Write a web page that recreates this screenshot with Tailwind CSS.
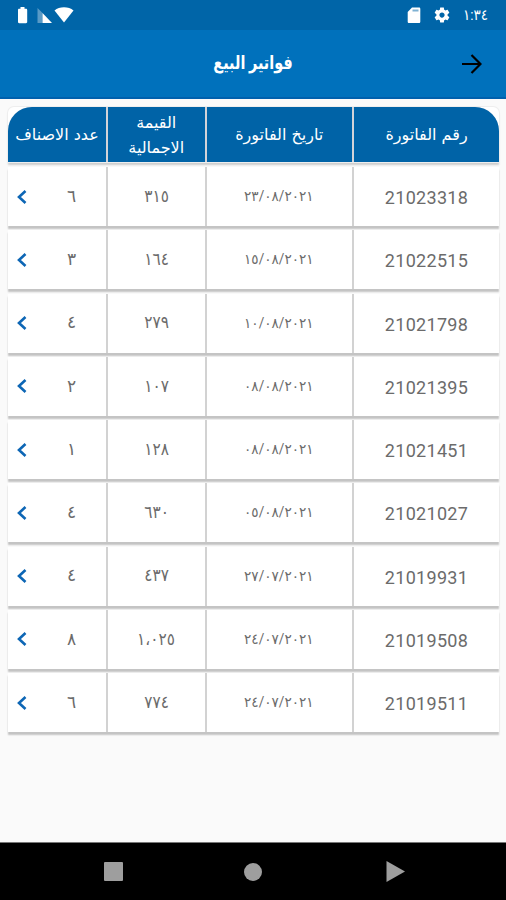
<!DOCTYPE html>
<html lang="ar">
<head>
	<meta charset="UTF-8">
	<meta name="viewport" content="width=device-width, initial-scale=1.0">
	<title>فواتير البيع</title>
	<script src="https://cdn.jsdelivr.net/npm/@tailwindcss/browser@4"></script>
</head>
<body class="bg-[#fafafa]">
	<div class="w-[506px] h-[900px] flex flex-col overflow-hidden font-['Roboto','DejaVu_Sans',sans-serif]">

		<!-- Status bar -->
		<div class="h-[30px] shrink-0 bg-[#0065a8] flex items-center justify-between pl-[17px] pr-4 text-white">
			<div class="flex items-center">
				<svg class="w-3 h-[18px]" viewBox="0 0 12 18" fill="currentColor"><path d="M3.500 1h4v1.800H9c.7 0 1.200.5 1.200 1.200v12c0 .7-.5 1.200-1.200 1.200H2.200C1.500 17.200 1 16.700 1 16V4c0-.7.5-1.200 1.200-1.200h1.300z"/></svg>
				<svg class="w-4 h-[18px] ml-2" viewBox="0 0 16 18" fill="currentColor"><path opacity=".35" d="M.5 2l5 5v10h-5z"/><path d="M5.500 7L15 17H5.500z"/></svg>
				<svg class="w-5 h-[18px] ml-px" viewBox="0 0 20 18" fill="currentColor"><path d="M10 16.500L.5 4.500C3 2.500 6.300 1.300 10 1.300s7 1.200 9.500 3.200z"/></svg>
			</div>
			<div class="flex items-center">
				<svg class="w-[14px] h-[18px]" viewBox="0 0 14 18" fill="currentColor"><path d="M5 1.500h7c.8 0 1.300.5 1.300 1.300v12.900c0 .8-.5 1.300-1.300 1.300H2c-.8 0-1.300-.5-1.300-1.300V6z"/><path d="M5.500 4.500h6" stroke="#0065a8" stroke-opacity=".5" stroke-width="2"/></svg>
				<svg class="w-[18px] h-[18px] ml-3" viewBox="0 0 24 24" fill="currentColor"><path d="M19.430 12.980c.04-.32.07-.64.07-.98s-.03-.66-.07-.98l2.110-1.650c.19-.15.24-.42.12-.64l-2-3.460c-.12-.22-.39-.3-.61-.22l-2.490 1c-.52-.4-1.080-.73-1.690-.98l-.38-2.650C14.460 2.180 14.250 2 14 2h-4c-.25 0-.46.18-.49.42l-.38 2.650c-.61.25-1.170.59-1.690.98l-2.490-1c-.23-.09-.49 0-.61.22l-2 3.460c-.13.22-.07.49.12.64l2.110 1.650c-.04.32-.07.65-.07.98s.03.66.07.98l-2.110 1.650c-.19.15-.24.42-.12.64l2 3.460c.12.22.39.3.61.22l2.490-1c.52.4 1.080.73 1.690.98l.38 2.650c.03.24.24.42.49.42h4c.25 0 .46-.18.49-.42l.38-2.650c.61-.25 1.170-.59 1.690-.98l2.490 1c.23.09.49 0 .61-.22l2-3.460c.12-.22.07-.49-.12-.64zM12 15.500c-1.930 0-3.500-1.570-3.500-3.500s1.570-3.500 3.500-3.500 3.500 1.570 3.500 3.500-1.570 3.500-3.500 3.500z"/></svg>
				<span class="ml-3 w-[27px] text-[15px] leading-none whitespace-nowrap scale-x-90 origin-left">١:٣٤</span>
			</div>
		</div>

		<!-- App bar -->
		<header class="h-[69px] shrink-0 bg-[#0071bc] border-b-2 border-[#0060ad] grid grid-cols-[68px_1fr_68px] items-center">
			<h1 class="col-start-2 text-center text-white text-[19px] font-bold scale-x-[.76]" dir="rtl">فواتير البيع</h1>
			<svg class="w-5 h-5 ml-6 mt-px" viewBox="0 0 20 20" fill="none" stroke="#000" stroke-width="2.200"><path d="M0 10h18M9.500 1l9 9-9 9"/></svg>
		</header>

		<!-- Invoices -->
		<main class="grow pl-2 pr-[7px] pt-2">
			<div class="h-[55px] mb-[5px] bg-white rounded-t-md shadow-[0_0_0_1px_#eeeeee,0_3px_2px_#cdcdcd]">
				<div class="h-full grid grid-cols-[98px_96.500px_145.500px_145px] gap-x-[2px] bg-[#d3d3d8] rounded-t-[24px] overflow-hidden text-white text-center text-[16px] leading-[25px] font-['DejaVu_Sans',sans-serif]">
					<div class="bg-[#0063a7] grid place-items-center"><span dir="rtl" class="whitespace-nowrap">عدد الاصناف</span></div>
					<div class="bg-[#0063a7] grid place-items-center"><span dir="rtl">القيمة<br>الاجمالية</span></div>
					<div class="bg-[#0063a7] grid place-items-center"><span dir="rtl">تاريخ الفاتورة</span></div>
					<div class="bg-[#0063a7] grid place-items-center"><span dir="rtl">رقم الفاتورة</span></div>
				</div>
			</div>
			<div id="rows"></div>
		</main>

		<!-- Navigation bar -->
		<nav class="h-[58px] shrink-0 bg-black border-t border-[#777777] grid grid-cols-[104px_140px_142px_1fr] items-center">
			<div class="col-start-2 size-[19px] bg-[#9e9e9e] rounded-[1px]"></div>
			<div class="size-[18px] bg-[#9e9e9e] rounded-full"></div>
			<svg class="w-[19px] h-[21px]" viewBox="0 0 19 21" fill="#9e9e9e"><path d="M.5 0L19 10.500.5 21z"/></svg>
		</nav>
	</div>

	<script>
		const invoices = [
			['21023318', '٢٣/٠٨/٢٠٢١', '٣١٥', '٦'],
			['21022515', '١٥/٠٨/٢٠٢١', '١٦٤', '٣'],
			['21021798', '١٠/٠٨/٢٠٢١', '٢٧٩', '٤'],
			['21021395', '٠٨/٠٨/٢٠٢١', '١٠٧', '٢'],
			['21021451', '٠٨/٠٨/٢٠٢١', '١٢٨', '١'],
			['21021027', '٠٥/٠٨/٢٠٢١', '٦٣٠', '٤'],
			['21019931', '٢٧/٠٧/٢٠٢١', '٤٣٧', '٤'],
			['21019508', '٢٤/٠٧/٢٠٢١', '١،٠٢٥', '٨'],
			['21019511', '٢٤/٠٧/٢٠٢١', '٧٧٤', '٦']
		];

		document.getElementById('rows').innerHTML = invoices.map(([number, date, total, items]) => `
			<div class="h-[59px] mb-[4.250px] grid grid-cols-[98px_96.500px_145.500px_145px] gap-x-[2px] bg-[#d2d2d2] shadow-[0_3px_1.500px_#c4c4c4] text-center text-[#6b6b6b]">
				<div class="bg-white grid grid-cols-[29px_1fr] items-center">
					<svg class="w-[10px] h-[14px] ml-[9px]" viewBox="0 0 10 14" fill="none" stroke="#0d66b5" stroke-width="2.600"><path d="M8.500 1L2 7l6.500 6"/></svg>
					<span class="text-[17px]">${items}</span>
				</div>
				<div class="bg-white grid place-items-center text-[17px]"><bdo dir="ltr" class="scale-x-90">${total}</bdo></div>
				<div class="bg-white grid place-items-center text-[14px]"><bdo dir="ltr" class="scale-x-[.97]">${date}</bdo></div>
				<div class="bg-white grid place-items-center pt-0.5 text-[18px] tracking-[0.300px]"><span>${number}</span></div>
			</div>
		`).join('');
	</script>
</body>
</html>
